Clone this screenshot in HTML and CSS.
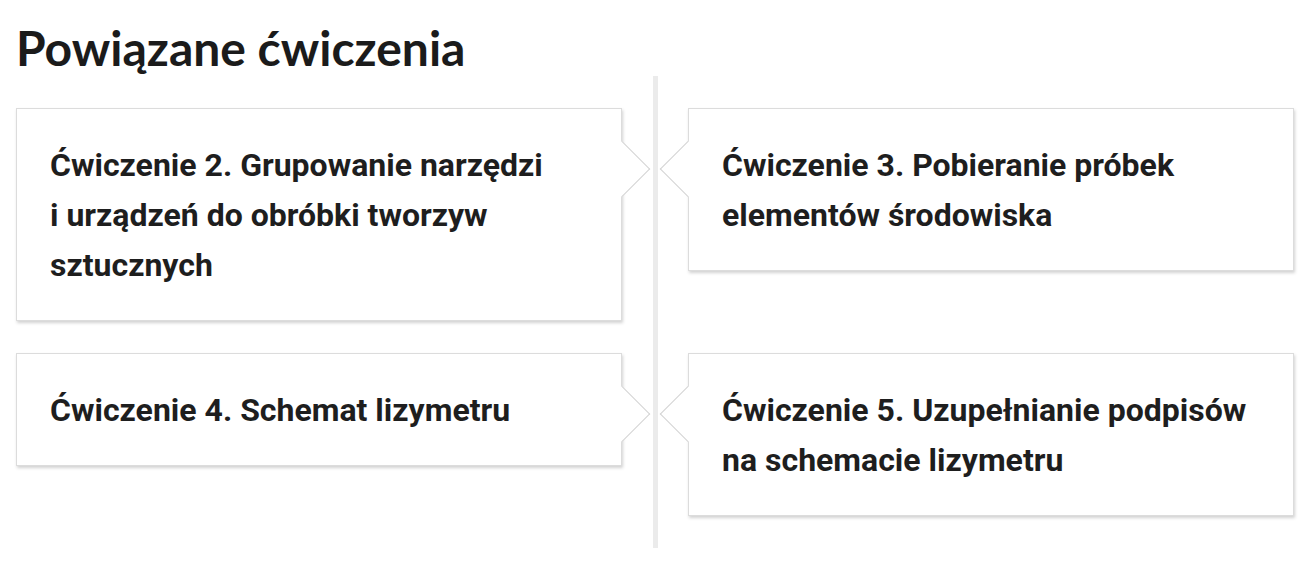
FILE: index.html
```html
<!DOCTYPE html>
<html lang="pl">
<head>
  <meta charset="UTF-8">
  <meta name="viewport" content="width=device-width, initial-scale=1.0">
  <title>Powiązane ćwiczenia</title>
  <link rel="stylesheet" href="styles.css">
</head>
<body>
  <section class="related">
    <h2 class="related-title">Powiązane ćwiczenia</h2>
    <div class="timeline">
      <div class="timeline-line"></div>
      <a class="timeline-card timeline-card--left" href="#">Ćwiczenie 2. Grupowanie narzędzi i&nbsp;urządzeń do obróbki tworzyw sztucznych</a>
      <a class="timeline-card timeline-card--right" href="#">Ćwiczenie 3. Pobieranie próbek elementów środowiska</a>
      <a class="timeline-card timeline-card--left" href="#">Ćwiczenie 4. Schemat lizymetru</a>
      <a class="timeline-card timeline-card--right" href="#">Ćwiczenie 5. Uzupełnianie podpisów na schemacie lizymetru</a>
    </div>
  </section>
</body>
</html>
```

FILE: styles.css
```css
html, body {
  margin: 0;
  padding: 0;
  background: #fff;
}
.related {
  padding: 19px 14px 0 16px;
}
.related-title {
  margin: 0;
  font-family: Lato, "Liberation Sans", sans-serif;
  font-weight: 700;
  font-size: 48px;
  line-height: 57px;
  color: #1b1b1b;
}
.timeline {
  display: grid;
  grid-template-columns: 606px 66px 606px;
  row-gap: 32px;
  align-items: start;
  padding: 32px 0;
}
/* pionowa linia między kolumnami */
.timeline-line {
  grid-column: 2;
  grid-row: 1 / span 2;
  align-self: stretch;
  justify-self: center;
  width: 5px;
  margin: -32px 0;
  background: #ebebeb;
}
.timeline-card {
  position: relative;
  display: block;
  padding: 31px 33px 30px;
  border: 1px solid #dcdcdc;
  box-shadow: 1px 2px 3px rgba(0, 0, 0, 0.18);
  background: #fff;
  font-family: Roboto, "Liberation Sans", sans-serif;
  font-weight: 700;
  font-size: 32px;
  line-height: 50px;
  color: #1e1e1e;
  text-decoration: none;
}
.timeline-card--left {
  grid-column: 1;
}
.timeline-card--right {
  grid-column: 3;
}
/* strzałka wskazująca na linię */
.timeline-card::after {
  content: '';
  position: absolute;
  top: 40px;
  width: 40px;
  height: 40px;
  box-sizing: border-box;
  background: #fff;
  transform: rotate(45deg);
}
.timeline-card--left::after {
  right: -21px;
  border-top: 1px solid #d4d4d4;
  border-right: 1px solid #d4d4d4;
}
.timeline-card--right::after {
  left: -21px;
  border-bottom: 1px solid #d4d4d4;
  border-left: 1px solid #d4d4d4;
}
```
